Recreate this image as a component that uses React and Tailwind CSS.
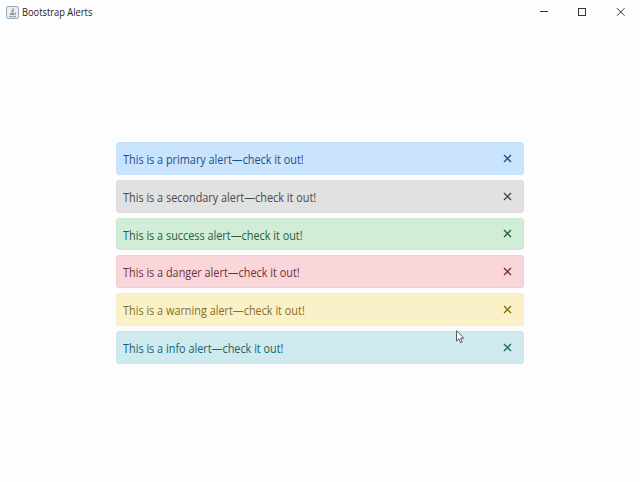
const alerts = [
  { kind: 'primary', box: 'bg-[#cae4fd] border-[#c4e0fb] text-[#1f4f88]' },
  { kind: 'secondary', box: 'bg-[#e1e1e2] border-[#dcdce0] text-[#4a4a4d]' },
  { kind: 'success', box: 'bg-[#d1edd8] border-[#c9e9d2] text-[#28603a]' },
  { kind: 'danger', box: 'bg-[#f8d6d9] border-[#f5ced2] text-[#74303a]' },
  { kind: 'warning', box: 'bg-[#fbf1c8] border-[#faeec2] text-[#857018]' },
  { kind: 'info', box: 'bg-[#ceeaee] border-[#c6e7eb] text-[#22626a]' },
];

function JavaIcon() {
  return (
    <svg className="h-[13px] w-[13px]" viewBox="0 0 13 13" fill="none">
      <rect x="0.5" y="0.5" width="12" height="12" rx="1.5" fill="#eaf1f6" stroke="#9aa9b4" />
      <path d="M7.4 2c.5 1.3-2.2 2-1.5 3.2.3.5.6.7.4 1.3M8.2 4c-.9.5-1.2.9-.7 1.6" stroke="#d98952" strokeWidth="1.2" />
      <path d="M3.8 7.3h5M4.2 8.6h4M3 10.3c2 .8 5 .8 7 0M9 7.2c1.5-.3 1.3 1.2-.2 1.5" stroke="#6286a1" strokeWidth="0.9" />
    </svg>
  );
}

function Alert({ kind, box }) {
  return (
    <div className={`flex h-[32.75px] items-center justify-between rounded-[3px] border pr-[11px] pl-[6px] ${box}`}>
      <span className="origin-left scale-x-[0.905] pt-[3.5px] text-[12px] leading-4 whitespace-nowrap">
        This is a {kind} alert—check it out!
      </span>
      <button aria-label="Close" className="flex">
        <svg className="h-[9px] w-[9px]" viewBox="0 0 9 9" fill="none" stroke="currentColor" strokeWidth="1.4">
          <path d="M1 1l7 7M8 1L1 8" />
        </svg>
      </button>
    </div>
  );
}

export default function App() {
  return (
    <div className="relative h-[482px] w-[640px] overflow-hidden bg-[#fdfdfd] font-['Open_Sans','Noto_Sans',sans-serif]">
      <header className="flex h-6 items-center pl-[6px] text-[#1c1c1c]">
        <JavaIcon />
        <h1 className="ml-[3px] flex-1 origin-left scale-x-[0.93] pb-px text-[10px] leading-3">Bootstrap Alerts</h1>
        <svg className="mr-[15px] h-[9px] w-[85px]" viewBox="0 0 85 9" fill="none" stroke="#353535">
          <path d="M0 3.5h8" />
          <rect x="38.5" y=".5" width="7" height="7" />
          <path d="M77 .2l7.5 7.5M84.5 .2L77 7.7" />
        </svg>
      </header>
      <main className="mt-[118px] ml-[116px] flex w-[408px] flex-col gap-[5px]">
        {alerts.map((a) => <Alert key={a.kind} {...a} />)}
      </main>
      <svg className="absolute top-[330px] left-[456px] h-[14px] w-[9px]" viewBox="0 0 9 14">
        <path d="M.5 .7v10.4l2.4-2.3 1.6 3.8 1.7-.7-1.6-3.7h3.2z" fill="white" stroke="#303840" strokeWidth="0.8" />
      </svg>
    </div>
  );
}
